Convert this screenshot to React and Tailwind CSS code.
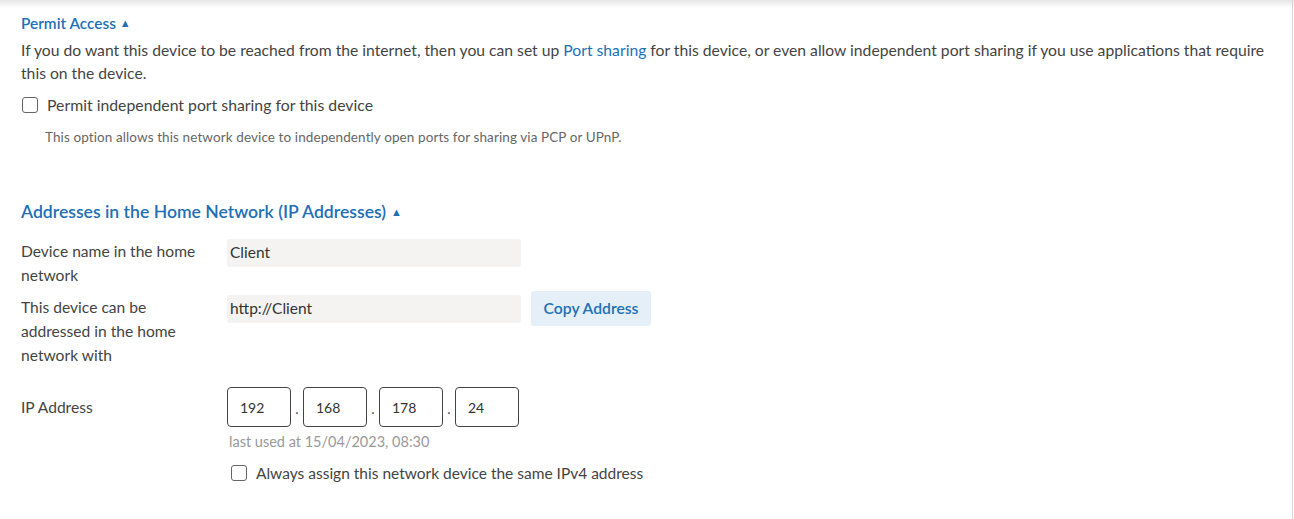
export default function App() {
  const font = { fontFamily: "Lato, 'Open Sans', sans-serif" };
  return (
    <div className="w-[1294px] h-[519px] bg-white relative overflow-hidden text-[#444]" style={font}>
      <div className="absolute top-0 left-0 right-0 h-[8px] bg-gradient-to-b from-[#e6e6e6] to-white" />
      <div className="absolute top-0 bottom-0 right-[1px] w-[1px] bg-[#d4d4d4]" />
      <div className="pl-[21px] pr-[20px] pt-[13px]">
        <div className="flex items-center gap-[4px] text-[15.4px] font-semibold text-[#2170b5] leading-[20px]">
          <span>Permit Access</span>
          <span className="text-[11px]">▲</span>
        </div>
        <p className="mt-[6px] text-[15.7px] leading-[23px] w-[1262px]">
          If you do want this device to be reached from the internet, then you can set up{" "}
          <span className="text-[#2170b5]">Port sharing</span> for this device, or even allow independent port sharing if you use applications that require this on the device.
        </p>
        <label className="mt-[10px] flex items-center gap-[9px] text-[15.8px] leading-[20px]">
          <span className="ml-[1px] w-[16px] h-[16px] rounded-[3px] border-[1.5px] border-[#666] bg-white" />
          <span>Permit independent port sharing for this device</span>
        </label>
        <div className="mt-[13px] ml-[24px] text-[13.5px] text-[#666] leading-[18px] tracking-[0.1px]">
          This option allows this network device to independently open ports for sharing via PCP or UPnP.
        </div>

        <div className="mt-[55px] flex items-center gap-[5px] text-[17.6px] font-semibold text-[#2170b5] leading-[22px]">
          <span>Addresses in the Home Network (IP Addresses)</span>
          <span className="text-[11px]">▲</span>
        </div>

        <div className="mt-[16px] flex">
          <div className="w-[206px] text-[15.6px] leading-[24px] pr-[18px]">Device name in the home network</div>
          <div className="w-[294px] h-[28px] bg-[#f4f3f1] rounded-[3px] flex items-center px-[3px] text-[15.5px] text-[#333]">Client</div>
        </div>

        <div className="mt-[8px] flex">
          <div className="w-[206px] text-[15.6px] leading-[24px] pr-[36px]">This device can be addressed in the home network with</div>
          <div className="flex items-start gap-[10px]">
            <div className="w-[294px] h-[28px] bg-[#f4f3f1] rounded-[3px] flex items-center px-[3px] text-[15.5px] text-[#333]">http://Client</div>
            <div className="-mt-[4px] w-[120px] h-[35px] bg-[#e5eff8] rounded-[3px] flex items-center justify-center text-[15.7px] font-semibold text-[#2170b5]">Copy Address</div>
          </div>
        </div>

        <div className="mt-[18px] flex">
          <div className="w-[206px] text-[15.6px] leading-[40px] pt-[2px]">IP Address</div>
          <div>
            <div className="flex items-center">
              {["192", "168", "178", "24"].map((v, i) => (
                <div key={v} className="flex items-center">
                  {i > 0 && <span className="w-[12px] text-center text-[14px] leading-[40px] pt-[4px]">.</span>}
                  <div className="w-[64px] h-[40px] border border-[#444] rounded-[4px] flex items-center pl-[12px] text-[14px] text-[#333]">{v}</div>
                </div>
              ))}
            </div>
            <div className="mt-[4px] ml-[2px] text-[14.5px] text-[#999] leading-[18px]">last used at 15/04/2023, 08:30</div>
            <label className="mt-[12px] ml-[4px] flex items-center gap-[9px] text-[15.5px] leading-[20px]">
              <span className="w-[16px] h-[16px] rounded-[3px] border-[1.5px] border-[#666] bg-white" />
              <span>Always assign this network device the same IPv4 address</span>
            </label>
          </div>
        </div>
      </div>
    </div>
  );
}
